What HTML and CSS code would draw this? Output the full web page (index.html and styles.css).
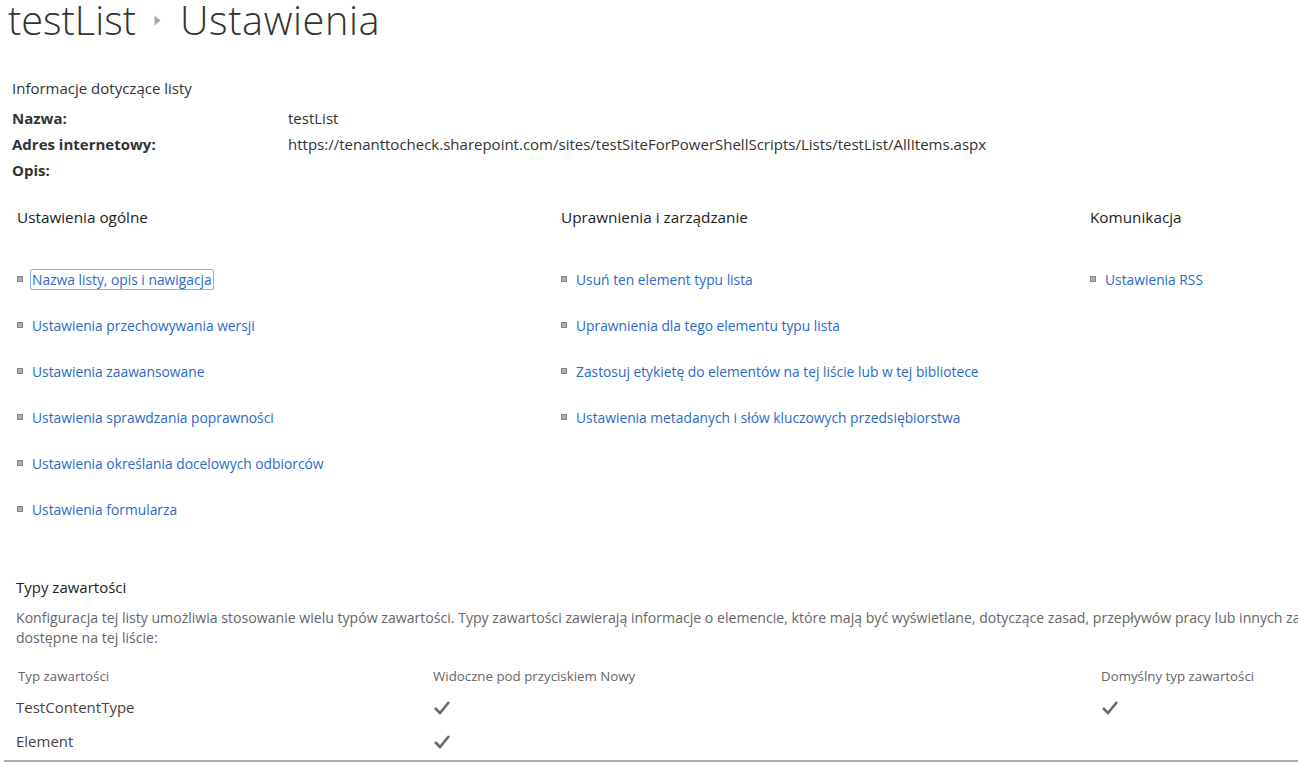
FILE: index.html
```html
<!DOCTYPE html>
<html lang="pl">
<head>
<meta charset="utf-8">
<title>testList - Ustawienia</title>
<link rel="stylesheet" href="styles.css">
</head>
<body>
<div class="page">
  <h1 class="title">
    <span class="crumb">testList</span>
    <svg class="crumb-arrow" width="7" height="11" viewBox="0 0 7 11"><path d="M0.5 0.5 L6.5 5.5 L0.5 10.5 Z" fill="#a6a6a6"/></svg>
    <span class="crumb crumb-current">Ustawienia</span>
  </h1>

  <section class="info">
    <div class="info-head">Informacje dotyczące listy</div>
    <div class="info-grid">
      <div class="info-label">Nazwa:</div><div class="info-value">testList</div>
      <div class="info-label">Adres internetowy:</div><div class="info-value">https://tenanttocheck.sharepoint.com/sites/testSiteForPowerShellScripts/Lists/testList/AllItems.aspx</div>
      <div class="info-label">Opis:</div><div class="info-value"></div>
    </div>
  </section>

  <section class="settings">
    <div class="col">
      <h3 class="col-head">Ustawienia ogólne</h3>
      <ul class="links">
        <li><a class="focused" href="#">Nazwa listy, opis i nawigacja</a></li>
        <li><a href="#">Ustawienia przechowywania wersji</a></li>
        <li><a href="#">Ustawienia zaawansowane</a></li>
        <li><a href="#">Ustawienia sprawdzania poprawności</a></li>
        <li><a href="#">Ustawienia określania docelowych odbiorców</a></li>
        <li><a href="#">Ustawienia formularza</a></li>
      </ul>
    </div>
    <div class="col">
      <h3 class="col-head">Uprawnienia i zarządzanie</h3>
      <ul class="links">
        <li><a href="#">Usuń ten element typu lista</a></li>
        <li><a href="#">Uprawnienia dla tego elementu typu lista</a></li>
        <li><a href="#">Zastosuj etykietę do elementów na tej liście lub w tej bibliotece</a></li>
        <li><a href="#">Ustawienia metadanych i słów kluczowych przedsiębiorstwa</a></li>
      </ul>
    </div>
    <div class="col">
      <h3 class="col-head">Komunikacja</h3>
      <ul class="links">
        <li><a href="#">Ustawienia RSS</a></li>
      </ul>
    </div>
  </section>

  <section class="ctypes">
    <h3 class="ct-head">Typy zawartości</h3>
    <p class="ct-desc">Konfiguracja tej listy umożliwia stosowanie wielu typów zawartości. Typy zawartości zawierają informacje o elemencie, które mają być wyświetlane, dotyczące zasad, przepływów pracy lub innych zachowań. Następujące typy zawartości są obecnie<br>dostępne na tej liście:</p>
    <div class="ct-table">
      <div class="ct-row ct-header">
        <div class="c1">Typ zawartości</div>
        <div class="c2">Widoczne pod przyciskiem Nowy</div>
        <div class="c3">Domyślny typ zawartości</div>
      </div>
      <div class="ct-row">
        <div class="c1 name">TestContentType</div>
        <div class="c2"><svg class="check" width="18" height="15" viewBox="0 0 18 15"><path d="M2 8 L7 13 L16 2" fill="none" stroke="#6a6a6a" stroke-width="2.6"/></svg></div>
        <div class="c3"><svg class="check" width="18" height="15" viewBox="0 0 18 15"><path d="M2 8 L7 13 L16 2" fill="none" stroke="#6a6a6a" stroke-width="2.6"/></svg></div>
      </div>
      <div class="ct-row">
        <div class="c1 name">Element</div>
        <div class="c2"><svg class="check" width="18" height="15" viewBox="0 0 18 15"><path d="M2 8 L7 13 L16 2" fill="none" stroke="#6a6a6a" stroke-width="2.6"/></svg></div>
        <div class="c3"></div>
      </div>
    </div>
  </section>
</div>
</body>
</html>
```

FILE: styles.css
```css
html, body {
  margin: 0;
  padding: 0;
  background: #fff;
  overflow: hidden;
}
body {
  font-family: "Open Sans", "Noto Sans", "Liberation Sans", sans-serif;
  color: #333;
  font-size: 15px;
}
.page {
  width: 1400px;
}
.title {
  margin: 0;
  padding: 0 0 0 8px;
  height: 40px;
  display: flex;
  align-items: flex-start;
  font-weight: 300;
  font-size: 39.7px;
  line-height: 40px;
  color: #333;
}
.crumb-current {
  letter-spacing: 0.6px;
}
.crumb-arrow {
  align-self: center;
  margin: 0 19px 0 18px;
}
.info {
  padding: 35px 0 0 12px;
}
.info-head {
  font-size: 15px;
  line-height: 26px;
  height: 26px;
  margin-bottom: 4px;
}
.info-grid {
  display: grid;
  grid-template-columns: 276px auto;
  grid-auto-rows: 26px;
  align-items: center;
}
.info-label {
  font-weight: 700;
  color: #333;
}
.info-value {
  color: #333;
}
.settings {
  display: grid;
  grid-template-columns: 544px 529px auto;
  padding: 22px 0 0 17px;
}
.col-head {
  margin: 0;
  font-size: 15.3px;
  font-weight: 400;
  line-height: 24px;
  color: #222;
}
.links {
  list-style: none;
  margin: 39px 0 0 0;
  padding: 0;
  display: flex;
  flex-direction: column;
  gap: 24px;
}
.links li {
  display: flex;
  align-items: center;
  height: 22px;
}
.links li::before {
  content: "";
  width: 4px;
  height: 4px;
  background: #b0b0b0;
  border: 1px solid #858585;
  margin-right: 7px;
  flex: none;
}
.links a {
  color: #2a6ac8;
  text-decoration: none;
  font-size: 13.8px;
  line-height: 19px;
  padding: 0 1px;
  border: 1.5px solid transparent;
  border-radius: 2px;
}
.links a.focused {
  border-color: #8fb0f0;
}
.ctypes {
  padding: 56px 0 0 16px;
}
.ct-head {
  margin: 0;
  font-size: 15px;
  font-weight: 400;
  line-height: 22px;
  color: #222;
}
.ct-desc {
  margin: 10px 0 0 0;
  font-size: 14.1px;
  line-height: 20px;
  color: #666;
  white-space: nowrap;
}
.ct-table {
  margin-top: 14px;
  margin-left: -12px;
  padding-left: 12px;
  padding-bottom: 2px;
  border-bottom: 2px solid #aaa;
  width: 1400px;
}
.ct-row {
  display: grid;
  grid-template-columns: 417px 668px auto;
  height: 34px;
  align-items: center;
}
.ct-header {
  height: 28px;
  font-size: 13.3px;
  color: #666;
}
.ct-header .c1 { padding-left: 2px; }
.name {
  font-size: 15px;
  color: #444;
}
.check {
  display: block;
}
```
